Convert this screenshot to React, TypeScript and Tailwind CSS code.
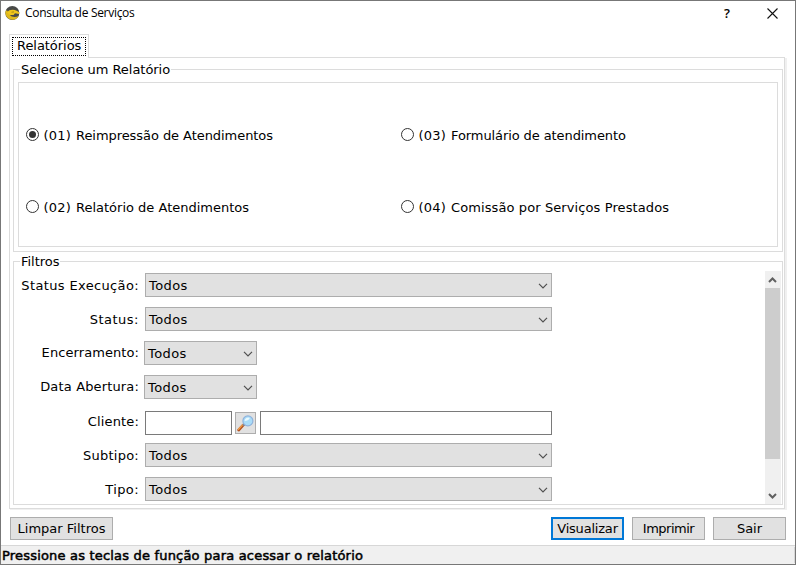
import type { ReactNode } from 'react';

function Chevron() {
  return (
    <svg width="10" height="6" viewBox="0 0 10 6" fill="none">
      <path d="M1 0.8 L5 4.8 L9 0.8" stroke="#505050" strokeWidth="1.2" />
    </svg>
  );
}

function Select({ narrow = false }: { narrow?: boolean }) {
  return (
    <div
      className={`${narrow ? '-ml-px w-[113px]' : 'w-[407px]'} flex h-6 items-center justify-between border border-[#adadad] bg-[#e1e1e1] pl-[3px] pr-[3px] pt-px`}
    >
      <span className="pt-px tracking-[0.4px]">Todos</span>
      <Chevron />
    </div>
  );
}

function Field({ label, offset = 'mt-[2px]', tracking, children }: { label: string; offset?: string; tracking: string; children: ReactNode }) {
  return (
    <div className="flex h-6 items-center">
      <span className={`mr-[6px] w-[125px] text-right ${tracking} ${offset}`}>{label}</span>
      {children}
    </div>
  );
}

function Group({ title, className, children }: { title: string; className: string; children: ReactNode }) {
  return (
    <section className={`border border-[#dcdcdc] ${className}`}>
      <h2 className="-mt-[9px] ml-[6px] h-[17px] w-fit bg-white px-px pt-px tracking-[-0.04px]">{title}</h2>
      {children}
    </section>
  );
}

function Radio({ code, label, checked = false, tracking = '' }: { code: string; label: string; checked?: boolean; tracking?: string }) {
  return (
    <div className="flex h-4 items-center">
      <span className="mr-[4.5px] flex size-[13px] shrink-0 -translate-y-px items-center justify-center rounded-full border border-[#333]">
        {checked && <span className="size-[7px] rounded-full bg-[#333]" />}
      </span>
      <span className="w-[32.5px] pt-[2px] tracking-[0.25px]">{code}</span>
      <span className={`pt-[2px] ${tracking}`}>{label}</span>
    </div>
  );
}

function Button({ children, className }: { children: ReactNode; className: string }) {
  return (
    <button className={`flex h-[23px] items-center justify-center bg-[#e1e1e1] ${className}`}>{children}</button>
  );
}

function Logo() {
  return (
    <svg width="15" height="14" viewBox="0 0 15 14">
      <ellipse cx="7.3" cy="7" rx="7" ry="6.9" fill="#484a48" />
      <path d="M0.6 5 C-0.4 9.6 3 13.9 7.6 13.8 C10.6 13.7 12.8 12 13.8 9.8 C10.8 11.6 6.4 11.4 4.8 8.8 L2 4.2Z" fill="#dfb91c" />
      <path d="M2 6.4 C4 3.6 8.5 3.2 11.6 4.8 L14.4 6.2 L14 8 L10 7.2 L8.6 8.9 L4.6 9Z" fill="#f0c61a" />
      <path d="M6.5 6.2 L9 5.9" stroke="#8a6f14" strokeWidth=".7" />
    </svg>
  );
}

function Magnifier() {
  return (
    <svg width="17" height="17" viewBox="0 0 17 17">
      <path d="M1.7 15 L6.4 9.9" stroke="#b55320" strokeWidth="2.8" strokeLinecap="round" />
      <path d="M1.5 14.2 L5.8 9.6" stroke="#f0a04c" strokeWidth="1.3" strokeLinecap="round" />
      <path d="M6 10.5 L8 8.6" stroke="#7b8794" strokeWidth="1.8" />
      <circle cx="10.9" cy="5.9" r="5" fill="#a9dcf8" stroke="#8fb2dc" strokeWidth="1.2" />
      <path d="M7.6 6 A3.5 3.5 0 0 1 12.8 3 C12 5 10 6 7.6 6Z" fill="#e9f9ff" />
    </svg>
  );
}

export default function App() {
  return (
    <div className="flex h-[565px] w-[796px] flex-col overflow-hidden border border-[#777] bg-white font-['Verdana','DejaVu_Sans',sans-serif] text-[13px] leading-4 text-black">
      <header className="flex h-[33px] shrink-0 items-start pl-1 pt-[5px]">
        <Logo />
        <h1 className="ml-[5px] grow font-['Open_Sans',sans-serif] text-[12px] leading-[14px] tracking-[-0.3px]">Consulta de Serviços</h1>
        <span className="mr-[37px] font-['Open_Sans',sans-serif] text-[13px] font-semibold leading-[15px]">?</span>
        <svg width="11" height="11" viewBox="0 0 11 11" className="mr-[17px] mt-[2px]">
          <path d="M.5 .5 L10.5 10.5 M10.5 .5 L.5 10.5" stroke="#111" strokeWidth="1.1" />
        </svg>
      </header>

      <main className="flex flex-col pl-2">
        <div className="relative z-10 -mb-px h-6 w-20 border border-b-0 border-[#dcdcdc] bg-white px-[2px] pt-[2px]">
          <div className="h-[19px] w-[74px] border border-dotted border-black pl-1 tracking-[-0.05px]">Relatórios</div>
        </div>
        <div className="h-[452px] w-[776px] border border-[#dcdcdc] pl-[3px] pt-[11px] shadow-[1px_1px_0_0_#f0f0f0,2px_1px_0_0_#f0f0f0]">
          <Group title="Selecione um Relatório" className="h-[183px] w-[770px]">
            <div className="ml-1 mt-1 grid h-[165px] w-[760px] grid-cols-[375px_1fr] grid-rows-[72px_16px] border border-[#dcdcdc] pl-[7px] pt-[44px]">
              <Radio code="(01)" label="Reimpressão de Atendimentos" tracking="tracking-[-0.06px]" checked />
              <Radio code="(03)" label="Formulário de atendimento" tracking="tracking-[-0.09px]" />
              <Radio code="(02)" label="Relatório de Atendimentos" />
              <Radio code="(04)" label="Comissão por Serviços Prestados" tracking="tracking-[0.1px]" />
            </div>
          </Group>
          <Group title="Filtros" className="mt-[9px] h-[244px] w-[770px]">
            <div className="-mt-px flex justify-between pr-[1px]">
              <div className="flex flex-col gap-[10px] pt-1">
                <Field label="Status Execução:" tracking="tracking-[0.36px]"><Select /></Field>
                <Field label="Status:" tracking="tracking-[0.5px]"><Select /></Field>
                <Field label="Encerramento:" tracking="tracking-[0.08px]" offset=""><Select narrow /></Field>
                <Field label="Data Abertura:" tracking="tracking-[0.15px]" offset=""><Select narrow /></Field>
                <div className="mb-[-2px] pt-[2px]">
                  <Field label="Cliente:" tracking="tracking-[0.15px]" offset="-mt-[2px]">
                    <div className="h-6 w-[87px] border border-[#7a7a7a]" />
                    <div className="ml-[3px] mr-1 flex h-[22px] w-[21px] items-center justify-center border border-[#adadad] bg-[#e1e1e1]">
                      <Magnifier />
                    </div>
                    <div className="h-6 w-[292px] border border-[#7a7a7a]" />
                  </Field>
                </div>
                <Field label="Subtipo:" tracking="tracking-[0.25px]"><Select /></Field>
                <Field label="Tipo:" tracking="tracking-[0.4px]"><Select /></Field>
              </div>
              <div className="mt-[2px] flex h-[233px] w-4 flex-col bg-[#f0f0f0]">
                <svg width="15" height="17" viewBox="0 0 15 17">
                  <path d="M4 11 L7.5 7.5 L11 11" fill="none" stroke="#606060" strokeWidth="2" />
                </svg>
                <div className="h-[171px] w-[15px] bg-[#cdcdcd]" />
                <svg width="15" height="17" viewBox="0 0 15 17" className="mt-auto">
                  <path d="M4 7 L7.5 10.5 L11 7" fill="none" stroke="#606060" strokeWidth="2" />
                </svg>
              </div>
            </div>
          </Group>
        </div>
      </main>

      <div className="mt-2 flex h-[28px] shrink-0 pl-[9px]">
        <Button className="mr-auto w-[103px] border border-[#adadad]">Limpar Filtros</Button>
        <div className="mr-[9px] flex gap-2">
          <Button className="w-[73px] border-2 border-[#0078d7] tracking-[-0.2px]">Visualizar</Button>
          <Button className="w-[73px] border border-[#adadad] tracking-[-0.5px]">Imprimir</Button>
          <Button className="w-[73px] border border-[#adadad]">Sair</Button>
        </div>
      </div>
      <footer className="flex grow items-center justify-between border-t border-[#d7d7d7] bg-[#f0f0f0] pl-px">
        <span className="pt-[2px] tracking-[0.19px] [-webkit-text-stroke:0.5px_#000]">Pressione as teclas de função para acessar o relatório</span>
        <span className="h-4 w-px bg-[#d7d7d7]" />
      </footer>
    </div>
  );
}
